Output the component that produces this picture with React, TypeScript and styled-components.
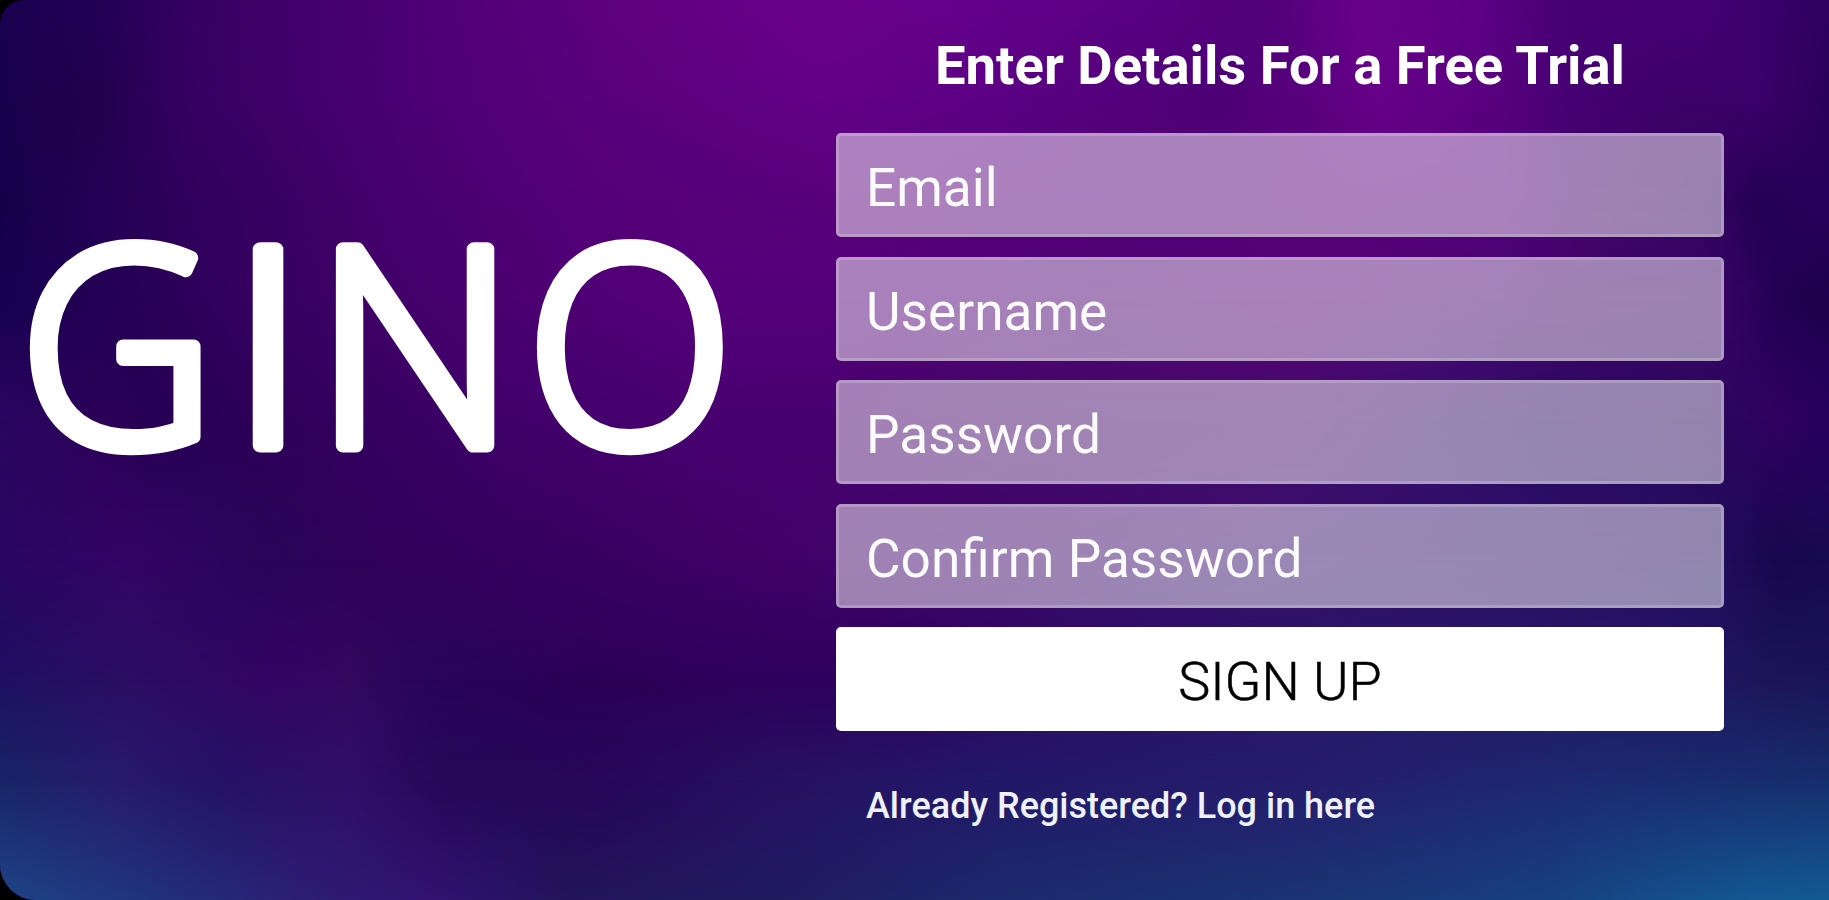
import React, { ReactElement } from "react";
import styled, { createGlobalStyle } from "styled-components";

interface BandProps {
  $from: number;
  $to: number;
  $stops: string;
}

// horizontal colour runs, each one fades into the next going down the page
const bands = [
  {
    y: 0,
    stops:
      "#1a0050 0px, #220055 100px, #380064 200px, #4c0074 400px, #5e0080 600px, #6b008a 820px, #62008a 1000px, #5a0084 1150px, #50007a 1260px, #68008a 1360px, #5e0086 1480px, #480074 1560px, #460074 1700px, #2e0062 1829px",
  },
  {
    y: 100,
    stops:
      "#19004e 0px, #22004f 100px, #380064 200px, #4b0073 400px, #5a007d 600px, #620086 820px, #5c0084 1000px, #4c0074 1220px, #660088 1380px, #5a0080 1490px, #440070 1580px, #3c0068 1680px, #3c006a 1760px, #2a005a 1829px",
  },
  {
    y: 200,
    stops:
      "#16004c 0px, #2b0058 150px, #47006f 400px, #550078 600px, #5a007c 820px, #560079 1000px, #540078 1200px, #58007a 1350px, #54007a 1500px, #42046a 1600px, #340460 1700px, #240054 1760px, #2a005c 1829px",
  },
  {
    y: 300,
    stops:
      "#170050 0px, #290057 150px, #3a0064 300px, #4b0070 500px, #55007a 700px, #54007a 850px, #4c0472 1100px, #540474 1300px, #480670 1500px, #3e0468 1600px, #380466 1720px, #220052 1780px, #1c004c 1829px",
  },
  {
    y: 420,
    stops:
      "#2a0660 0px, #2c0058 100px, #260054 150px, #30005a 300px, #40006a 500px, #480070 700px, #48006e 850px, #440868 1000px, #440a6c 1300px, #360e6c 1430px, #2a0a62 1550px, #2a085c 1700px, #300060 1780px, #280060 1829px",
  },
  {
    y: 560,
    stops:
      "#2a0662 0px, #340466 130px, #290459 260px, #31005a 400px, #390061 600px, #42006a 780px, #40046a 850px, #3e046a 1000px, #38106c 1250px, #2e1068 1500px, #240e60 1700px, #16084e 1780px, #180a50 1829px",
  },
  {
    y: 680,
    stops:
      "#1e1060 0px, #2a0e62 130px, #340464 270px, #33085f 350px, #28045a 430px, #2c0057 600px, #2e005c 780px, #2e005c 880px, #2a1064 1100px, #281866 1400px, #201660 1700px, #1a1458 1829px",
  },
  {
    y: 780,
    stops:
      "#182466 0px, #281a6c 120px, #241264 220px, #300e68 350px, #240856 450px, #260658 600px, #261060 760px, #221868 1000px, #261c6c 1300px, #1c2a70 1600px, #162e6c 1829px",
  },
  {
    y: 900,
    stops:
      "#1e4486 0px, #20327c 150px, #2c1e74 300px, #321272 430px, #22145c 560px, #201c62 800px, #1c2a6c 1000px, #1a3472 1300px, #174080 1550px, #125892 1750px, #125a94 1829px",
  },
];

// every letter of the wordmark has its own width
const letters = [
  { char: "G", x: 20, scale: 0.98 },
  { char: "I", x: 230, scale: 1.1 },
  { char: "N", x: 315, scale: 1.01 },
  { char: "O", x: 527, scale: 0.98 },
];

const fields = [
  { label: "Email", type: "email" },
  { label: "Username", type: "text" },
  { label: "Password", type: "password" },
  { label: "Confirm Password", type: "password" },
];

const GlobalStyle = createGlobalStyle`
  * {
    box-sizing: border-box;
  }

  body {
    margin: 0;
    background: #000;
    font-family: Roboto, "Liberation Sans", sans-serif;
  }
`;

const Scene = styled.main`
  display: grid;
  width: 1829px;
  height: 900px;
  overflow: hidden;
  border-radius: 24px 0 0 36px;
`;

const Band = styled.div<BandProps>`
  grid-area: 1 / 1;
  background: linear-gradient(to right, ${(p) => p.$stops});
  mask-image: linear-gradient(
    to bottom,
    ${(p) => (p.$to ? "transparent" : "#000")} ${(p) => p.$from}px,
    #000 ${(p) => p.$to}px
  );
`;

const Content = styled.div`
  grid-area: 1 / 1;
  z-index: 1;
  display: grid;
  grid-template-columns: 836px 888px;
`;

const Brand = styled.h1`
  margin: 0;
  padding-top: 120px;
`;

const Logo = styled.svg`
  display: block;
  width: 800px;
  height: 460px;
  font-family: "Open Sans", sans-serif;
  font-size: 275px;
  font-weight: 300;
  fill: #fff;
  stroke: #fff;
  stroke-width: 14px;
  stroke-linejoin: round;
`;

const Form = styled.form`
  display: flex;
  flex-direction: column;
  padding-top: 34px;
`;

const Title = styled.h2`
  margin: 0 0 36px;
  height: 63px;
  line-height: 63px;
  font-size: 54.4px;
  font-weight: 700;
  text-align: center;
  white-space: nowrap;
  color: #fff;
`;

const Fields = styled.div`
  display: grid;
  gap: 19.7px;
`;

const Input = styled.input`
  width: 100%;
  height: 104px;
  padding: 6px 27px 0;
  border: 3px solid rgba(255, 255, 255, 0.2);
  border-radius: 5px;
  background: rgba(255, 255, 255, 0.5);
  font-family: inherit;
  font-size: 53.2px;
  color: #fff;

  &::placeholder {
    color: #fff;
    opacity: 0.97;
  }
`;

const Button = styled.button`
  width: 100%;
  height: 104px;
  margin-top: -1px;
  padding: 5px 0 0;
  border: 0;
  border-radius: 5px;
  background: #fff;
  font-family: inherit;
  font-size: 54px;
  font-weight: 300;
  color: #000;
  -webkit-text-stroke: 0.5px #000;
`;

const LoginLink = styled.a`
  margin: 53px 0 0 30px;
  line-height: 44px;
  font-size: 36px;
  font-weight: 500;
  white-space: nowrap;
  color: #eef0fa;
`;

function App(): ReactElement {
  return (
    <>
      <GlobalStyle />
      <Scene>
        {bands.map((band, index) => (
          <Band
            key={band.y}
            $from={index ? bands[index - 1].y : 0}
            $to={band.y}
            $stops={band.stops}
          />
        ))}
        <Content>
          <Brand>
            <Logo viewBox="0 0 800 460" aria-label="GINO">
              {letters.map(({ char, x, scale }) => (
                <text
                  key={char}
                  transform={`translate(${x} 325.5) scale(${scale} 1)`}
                >
                  {char}
                </text>
              ))}
            </Logo>
          </Brand>
          <Form>
            <Title>Enter Details For a Free Trial</Title>
            <Fields>
              {fields.map((field) => (
                <Input
                  key={field.label}
                  type={field.type}
                  placeholder={field.label}
                />
              ))}
              <Button type="button">SIGN UP</Button>
            </Fields>
            <LoginLink>Already Registered? Log in here</LoginLink>
          </Form>
        </Content>
      </Scene>
    </>
  );
}

export default App;
